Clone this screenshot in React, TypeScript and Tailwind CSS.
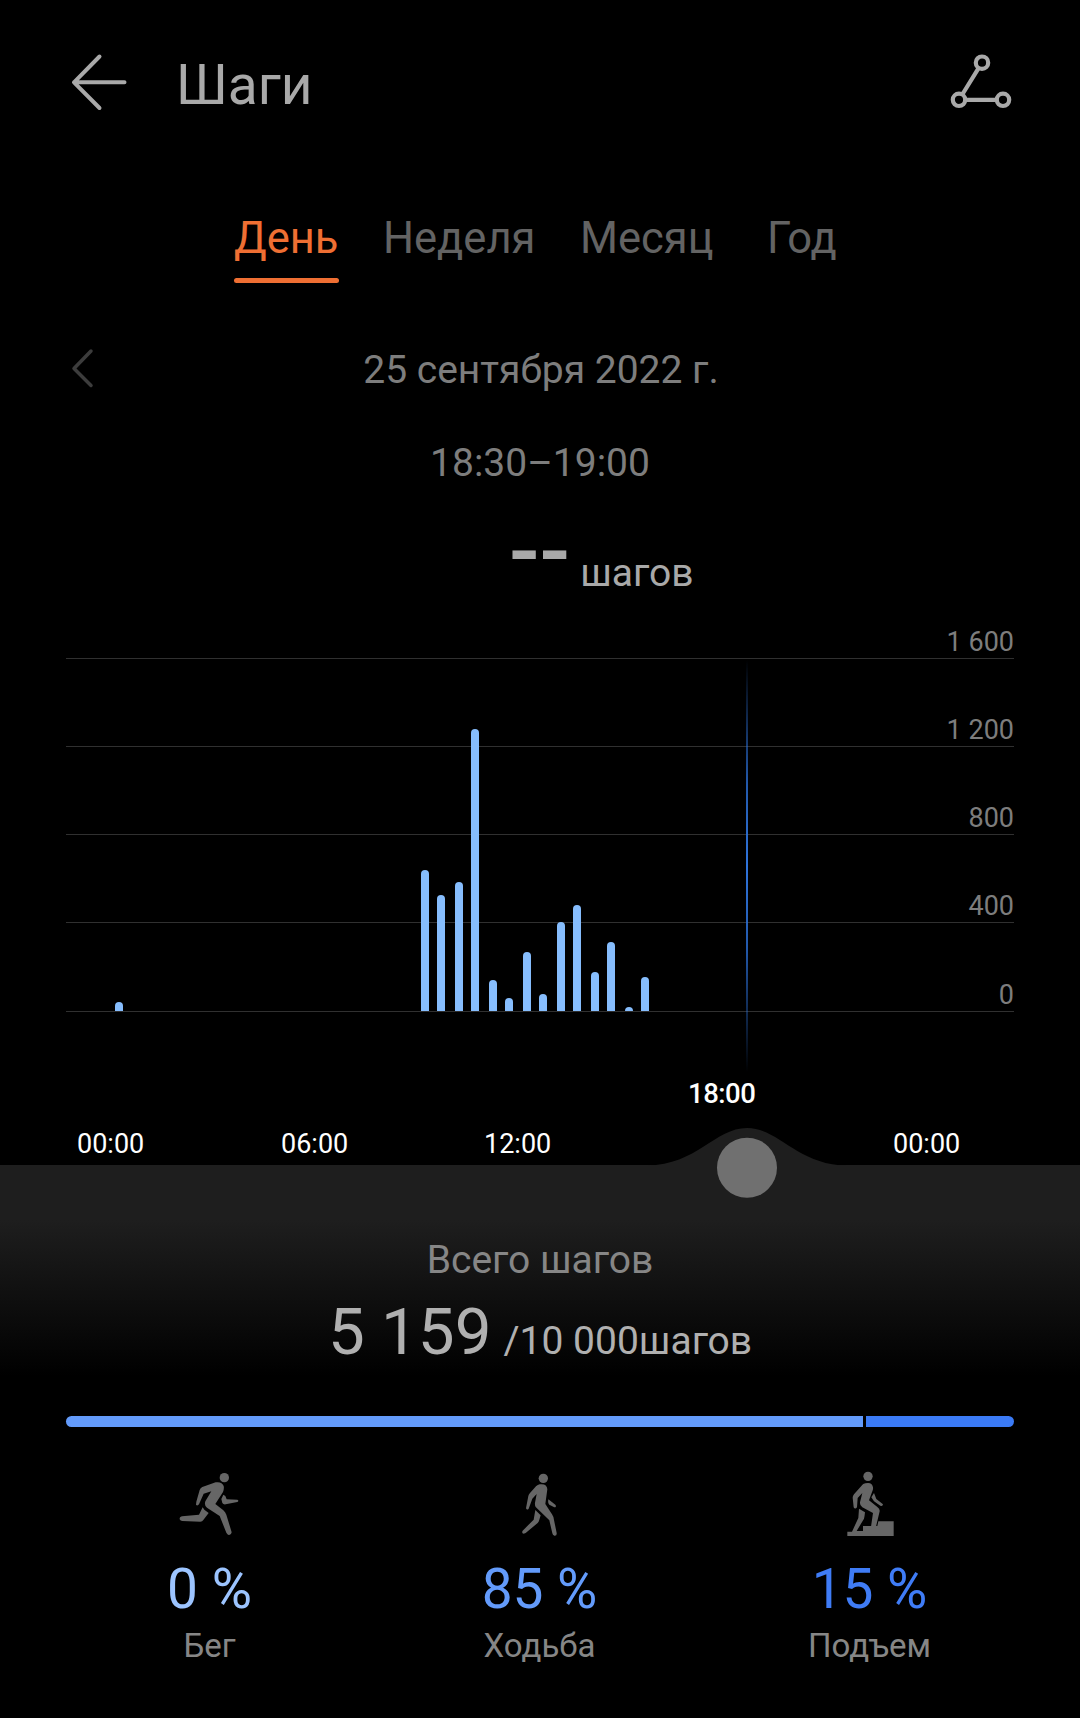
const tabs = ["День", "Неделя", "Месяц", "Год"];

const gridValues = ["1 600", "1 200", "800", "400", "0"];

// half-hour buckets: x offset inside the chart and bar height
const bars = [
  { x: 49, h: 9 },
  { x: 355, h: 141 },
  { x: 371, h: 116 },
  { x: 389, h: 129 },
  { x: 405, h: 282 },
  { x: 423, h: 31 },
  { x: 439, h: 13 },
  { x: 457, h: 59 },
  { x: 473, h: 17 },
  { x: 491, h: 89 },
  { x: 507, h: 106 },
  { x: 525, h: 39 },
  { x: 541, h: 69 },
  { x: 559, h: 4 },
  { x: 575, h: 34 },
];

function barPath(x: number, h: number) {
  const r = Math.min(4, h);
  return `M${x} 353V${353 - h + r}a4 ${r} 0 0 1 8 0V353z`;
}

function Header() {
  return (
    <header className="flex h-[164px] items-start justify-between pl-[71px] pr-[68px] pt-[50px]">
      <div className="flex items-start">
        <svg className="mt-[3px]" width="58" height="60" viewBox="0 0 58 60" fill="none" stroke="#a9a9a9" strokeWidth="4" strokeLinecap="round" strokeLinejoin="round">
          <path d="M28.5 3.500L3 29.300L28.500 55M3 29.300H53.500" />
        </svg>
        <h1 className="ml-[47px] text-[55px] leading-[70px] text-[#a9a9a9]">Шаги</h1>
      </div>
      <svg className="mt-[3px]" width="62" height="58" viewBox="0 0 62 58" fill="none" stroke="#a9a9a9" strokeWidth="4.200">
        <circle cx="32" cy="9.700" r="6.200" />
        <circle cx="9" cy="46.800" r="6.200" />
        <circle cx="53" cy="46.800" r="6.200" />
        <path d="M28.600 15.200L12.300 41.500M15.200 46.800H46.800" />
      </svg>
    </header>
  );
}

function Tabs() {
  return (
    <nav className="flex pl-[234px] pt-[48px] text-[43.5px] leading-[53px] text-[#636363]">
      <div className="w-[105px]">
        <div className="h-[66px] text-[#ef6f33]">{tabs[0]}</div>
        <div className="h-[5px] rounded-full bg-[#ef6f33]" />
      </div>
      <div className="ml-[44px] w-[197px]">{tabs[1]}</div>
      <div className="w-[187px]">{tabs[2]}</div>
      <div>{tabs[3]}</div>
    </nav>
  );
}

function Chart() {
  return (
    <section className="relative mx-[66px] h-[353px]">
      <div className="flex h-[354px] flex-col text-[27px] leading-[32px] text-[#7d7d7d]">
        <div className="h-px bg-[#303030]" />
        {gridValues.slice(1).map((v) => (
          <div
            key={v}
            className="flex h-[88px] items-end justify-end border-b border-[#303030] last:h-[89px]"
          >
            <span>{v}</span>
          </div>
        ))}
      </div>
      <span className="absolute -top-[32px] right-0 text-[27px] leading-[32px] text-[#7d7d7d]">
        {gridValues[0]}
      </span>
      <svg className="absolute left-0 top-0 overflow-visible" width="948" height="353" fill="#86bdfd">
        <defs>
          <linearGradient id="cursor" x1="0" y1="0" x2="0" y2="1">
            <stop offset="0" stopColor="#2b6fd6" stopOpacity="0" />
            <stop offset="0.3" stopColor="#2b6fd6" stopOpacity="0.8" />
            <stop offset="0.5" stopColor="#2f74dc" />
            <stop offset="0.7" stopColor="#2b6fd6" stopOpacity="0.8" />
            <stop offset="1" stopColor="#2b6fd6" stopOpacity="0" />
          </linearGradient>
        </defs>
        {bars.map((b) => (
          <path key={b.x} d={barPath(b.x, b.h)} />
        ))}
        <rect x="680" y="2" width="2" height="412" fill="url(#cursor)" />
      </svg>
    </section>
  );
}

function TimeAxis() {
  return (
    <section className="flex h-[154px] items-end pb-[4px] pl-[77px] text-[27px] leading-[34px] text-white">
      <span className="w-[204px]">00:00</span>
      <span className="w-[203px]">06:00</span>
      <span className="w-[204px]">12:00</span>
      <span className="mb-[50px] w-[205px] text-[27.5px] font-medium tracking-[-0.5px]">18:00</span>
      <span>00:00</span>
    </section>
  );
}

function RunIcon() {
  return (
    <svg width="100" height="85" viewBox="0 0 300 255" fill="#666">
      <circle cx="193" cy="53" r="14" />
      <path d="M127 81L167 67Q186 64 191 78Q193 86 189 96L166 132L190 151Q196 156 199 164L215 217Q214 226 206 225Q202 224 199 218L179 168L141 143Q132 136 136 124L154 94L131 101L117 133Q112 139 108 134L109 125L119 90Q121 84 127 81Z" />
      <path d="M190 104L184 117L187 129Q190 134 197 133L232 126Q238 122 232 119L200 118L196 108Z" />
      <path d="M128 142L117 164L66 169Q58 171 59 178Q61 183 67 183L121 185Q127 185 130 180L146 159L133 149Z" />
    </svg>
  );
}

function WalkIcon() {
  return (
    <svg width="80" height="85" viewBox="0 0 240 255" fill="#666">
      <circle cx="130" cy="55" r="14" />
      <path d="M119 73Q141 70 142 88L136 132L156 163Q161 170 162 180L170 219Q171 228 163 227Q158 226 157 220L148 181L107 141Q104 136 105 128L110 102L97 116L86 146Q81 152 78 145L85 108Q86 103 90 99L108 79Q113 74 119 73Z" />
      <path d="M145 118L166 134Q171 141 163 142L148 134Q143 131 145 118Z" />
      <path d="M106 150L101 179L68 212Q64 219 71 221L77 219L113 189Q117 185 118 179L122 166Z" />
    </svg>
  );
}

function ClimbIcon() {
  return (
    <svg width="80" height="85" viewBox="0 0 240 255" fill="#666">
      <circle cx="114" cy="49" r="14" />
      <path d="M106 70Q126 65 129 82Q130 87 127 94L117 121L142 141Q150 146 149 154L138 200H123L129 159L97 142Q89 137 90 127L97 99L83 114L81 142Q75 149 71 142L68 113Q68 108 72 103L94 78Q99 71 106 70Z" />
      <path d="M132 99L124 112L132 124L151 137Q158 140 159 133L139 117Z" />
      <path d="M87 146L85 174L66 215H52V228H191V184H145L142 198H99V213H80L102 176Q104 168 105 157Z" />
    </svg>
  );
}

function Summary() {
  return (
    <section className="relative h-[251px] bg-linear-to-b/srgb from-[#1e1e1e] from-22% to-black to-84%">
      {/* slider handle with the hump under it */}
      <svg className="absolute -top-[37px] left-[647px]" width="200" height="72" viewBox="0 0 200 72">
        <path d="M0 37.500C50 37 68 0 100 0S150 37 200 37.500z" fill="#1e1e1e" />
        <circle cx="100" cy="39.700" r="30" fill="#707070" />
      </svg>
      <p className="pt-[72px] text-center text-[39px] leading-[46px] text-[#868686]">Всего шагов</p>
      <p className="mt-[3px] pl-[328px] leading-[92px] text-[#b0b0b0]">
        <span className="text-[65.5px]">5 159</span>
        <span className="ml-[12px] text-[39px]">/10 000шагов</span>
      </p>
    </section>
  );
}

const stats = [
  { label: "Бег", value: "0 %", color: "text-[#9cc4ff]", icon: <RunIcon /> },
  { label: "Ходьба", value: "85 %", color: "text-[#639bfb]", icon: <WalkIcon /> },
  { label: "Подъем", value: "15 %", color: "text-[#3f7cf6]", icon: <ClimbIcon /> },
];

export default function App() {
  return (
    <div className="h-[1718px] w-[1080px] overflow-hidden bg-black font-['Roboto',sans-serif]">
      <Header />
      <Tabs />

      <div className="mt-[57px] flex h-[60px] items-center px-[71px]">
        <svg className="-mt-[4px]" width="24" height="40" viewBox="0 0 24 40" fill="none" stroke="#3c3c3c" strokeWidth="3.500" strokeLinecap="round" strokeLinejoin="round">
          <path d="M20 3L3 20.500L20 37.500" />
        </svg>
        <div className="flex-1 pr-[22px] text-center text-[39px] text-[#7d7d7d]">25 сентября 2022 г.</div>
      </div>
      <div className="mt-[37px] text-center text-[39px] leading-[52px] text-[#7d7d7d]">18:30–19:00</div>

      <div className="mt-[28px] flex h-[103px] items-start pl-[509px] text-[#a9a9a9]">
        <span className="text-[90px] font-medium leading-[70px]">--</span>
        <span className="ml-[10px] mt-[31px] text-[39px] leading-[50px]">шагов</span>
      </div>

      <div className="h-[38px]" />
      <Chart />
      <TimeAxis />
      <Summary />

      <div className="mx-[66px] flex gap-[3px]">
        <div className="h-[11px] w-[797px] rounded-l-full bg-[#639bfb]" />
        <div className="h-[11px] flex-1 rounded-r-full bg-[#3b7bf6]" />
      </div>

      <div className="mt-[33px] grid grid-cols-[330px_330px_330px] pl-[45px]">
        {stats.map((s) => (
          <div key={s.label} className="flex flex-col items-center">
            {s.icon}
            <div className={`mt-[12px] pr-[1px] text-[55px] leading-[64px] ${s.color}`}>{s.value}</div>
            <div className="mt-[6px] pr-[1px] text-[33px] leading-[38px] text-[#868686]">{s.label}</div>
          </div>
        ))}
      </div>
    </div>
  );
}
